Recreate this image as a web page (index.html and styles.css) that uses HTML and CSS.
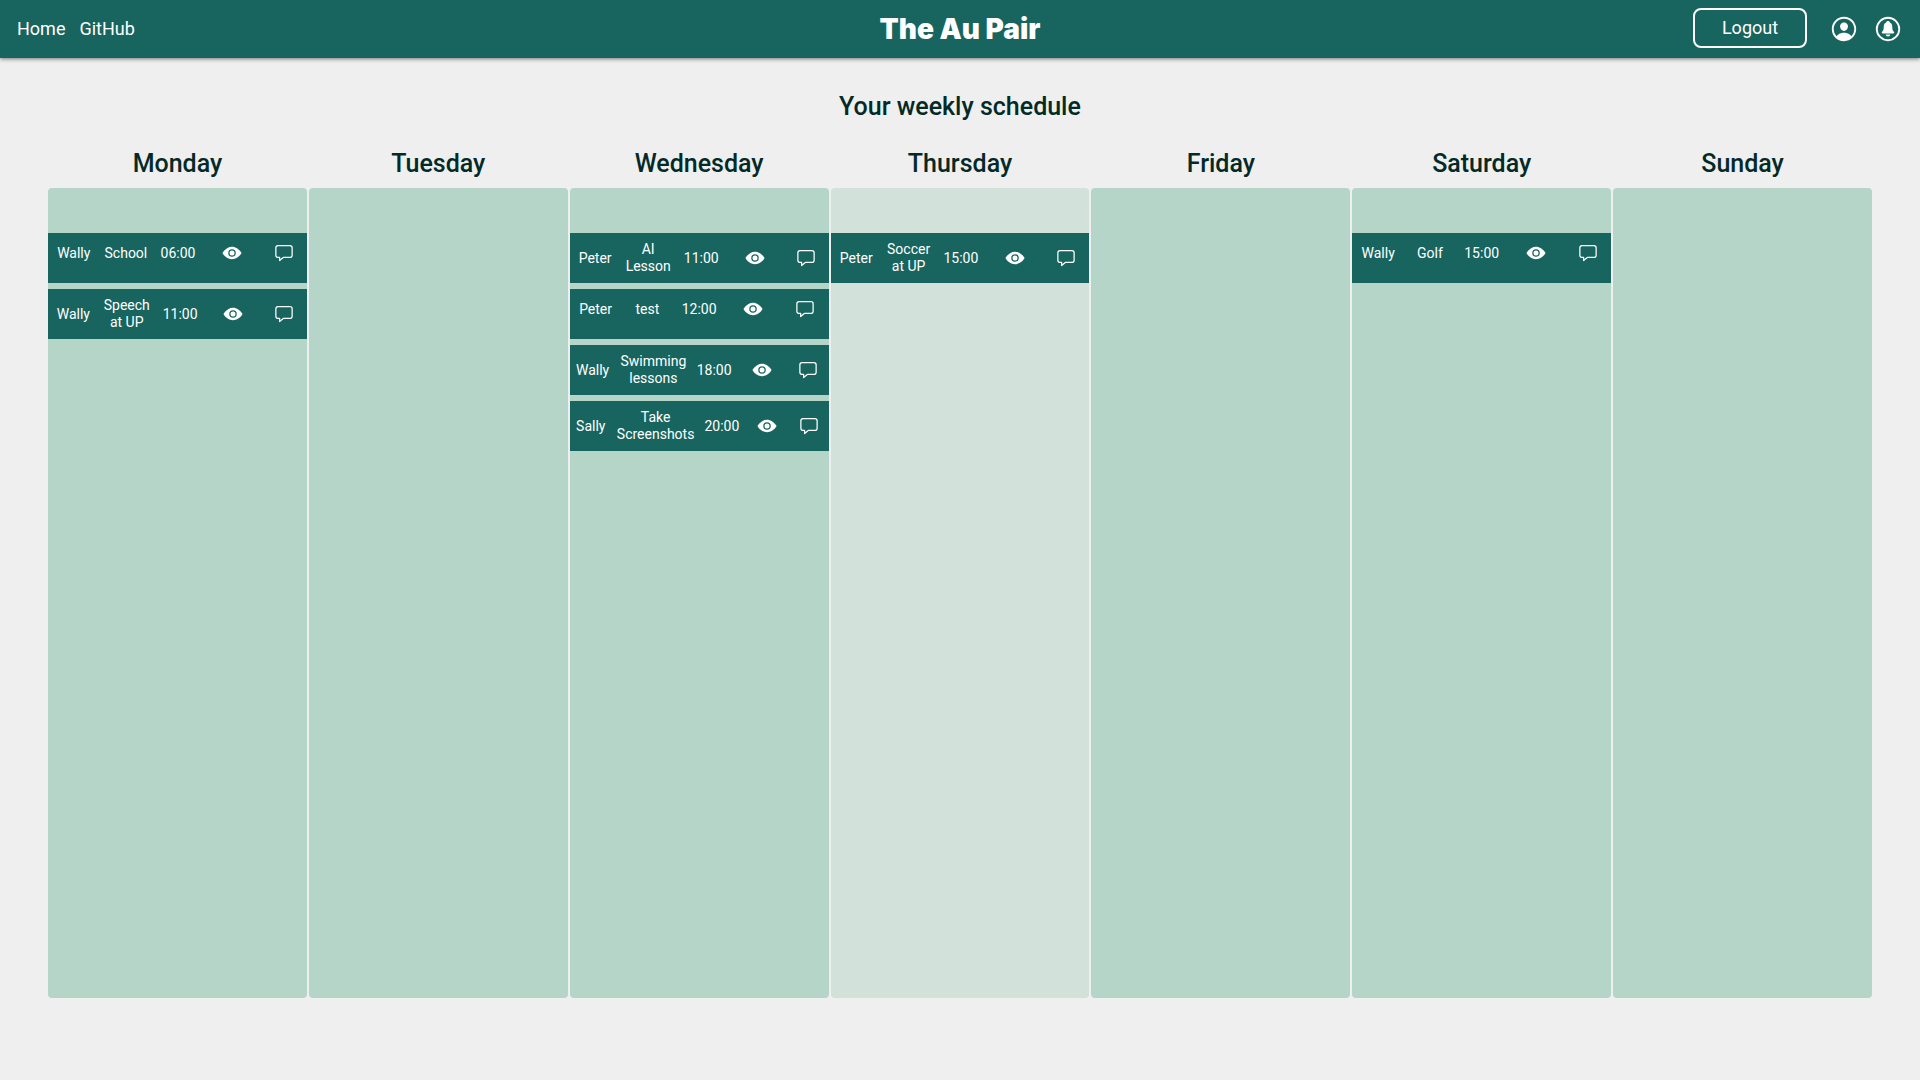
FILE: index.html
```html
<!DOCTYPE html>
<html lang="en">
<head>
<meta charset="utf-8">
<meta name="viewport" content="width=device-width, initial-scale=1">
<title>The Au Pair</title>
<link rel="stylesheet" href="styles.css">
</head>
<body>
<svg class="sprite" aria-hidden="true">
  <symbol id="eye" viewBox="0 0 512 512"><circle cx="256" cy="256" r="64"/><path d="M490.84 238.6c-26.46-40.92-60.79-75.68-99.27-100.53C349 110.55 302 96 255.66 96c-42.52 0-84.33 12.15-124.27 36.11-40.73 24.43-77.63 60.12-109.68 106.07a31.92 31.92 0 00-.64 35.54c26.41 41.33 60.4 76.14 98.28 100.65C162 402 207.9 416 255.66 416c46.71 0 93.81-14.43 136.2-41.72 38.46-24.77 72.72-59.66 99.08-100.92a32.2 32.2 0 00-.1-34.76zM256 352a96 96 0 1196-96 96.11 96.11 0 01-96 96z"/></symbol>
  <symbol id="chat" viewBox="0 0 512 512"><path fill="none" stroke="currentColor" stroke-width="32" stroke-linejoin="round" d="M408 64H104a56.16 56.16 0 00-56 56v192a56.16 56.16 0 0056 56h40v80l93.72-78.14a8 8 0 015.13-1.86H408a56.16 56.16 0 0056-56V120a56.16 56.16 0 00-56-56z"/></symbol>
</svg>
<header class="topbar">
  <nav class="links">
    <a href="#home">Home</a>
    <a href="#github">GitHub</a>
  </nav>
  <div class="brand">The Au Pair</div>
  <div class="actions">
    <button class="logout" type="button">Logout</button>
    <button class="icon-button" type="button" aria-label="Profile"><svg class="icon-large" viewBox="0 0 512 512"><path d="M258.9 48C141.92 46.42 46.42 141.92 48 258.9c1.56 112.19 92.91 203.54 205.1 205.1 117 1.6 212.48-93.9 210.88-210.88C462.44 140.91 371.09 49.56 258.9 48zm126.42 327.25a4 4 0 01-6.14-.32 124.27 124.27 0 00-32.35-29.59C321.37 329 289.11 320 256 320s-65.37 9-90.83 25.34a124.24 124.24 0 00-32.35 29.58 4 4 0 01-6.14.32A175.32 175.32 0 0180 259c-1.63-97.31 78.22-178.76 175.57-179S432 158.81 432 256a175.32 175.32 0 01-46.68 119.25z"/><path d="M256 144c-19.72 0-37.55 7.39-50.22 20.82s-19 32-17.57 51.93C191.11 256 221.52 288 256 288s64.83-32 67.79-71.24c1.48-19.74-4.8-38.14-17.68-51.82C293.39 151.44 275.59 144 256 144z"/></svg></button>
    <button class="icon-button" type="button" aria-label="Notifications"><svg class="icon-large" viewBox="0 0 512 512"><circle cx="256" cy="256" r="192" fill="none" stroke="currentColor" stroke-width="32"/><path d="M218 348h76c0 20-18 34-38 34s-38-14-38-34z"/><path d="M356 302c-15-18-27-26-27-81 0-50-20-68-42-77-5-14-15-24-31-24s-26 10-31 24c-22 9-42 27-42 77 0 55-12 63-27 81-11 14-5 30 12 30h176c17 0 23-16 12-30z"/></svg></button>
  </div>
</header>
<main class="schedule">
  <h1 class="title">Your weekly schedule</h1>
  <div class="week">
    <section class="day">
      <h2 class="day-name">Monday</h2>
      <ul class="day-list">
        <li class="task"><span>Wally</span><span>School</span><span>06:00</span><div class="action"><button type="button" aria-label="View"><svg><use href="#eye"/></svg></button></div><div class="action"><button type="button" aria-label="Chat"><svg><use href="#chat"/></svg></button></div></li>
        <li class="task"><span>Wally</span><span>Speech at UP</span><span>11:00</span><div class="action"><button type="button" aria-label="View"><svg><use href="#eye"/></svg></button></div><div class="action"><button type="button" aria-label="Chat"><svg><use href="#chat"/></svg></button></div></li>
      </ul>
    </section>
    <section class="day">
      <h2 class="day-name">Tuesday</h2>
      <ul class="day-list"></ul>
    </section>
    <section class="day">
      <h2 class="day-name">Wednesday</h2>
      <ul class="day-list">
        <li class="task"><span>Peter</span><span>AI Lesson</span><span>11:00</span><div class="action"><button type="button" aria-label="View"><svg><use href="#eye"/></svg></button></div><div class="action"><button type="button" aria-label="Chat"><svg><use href="#chat"/></svg></button></div></li>
        <li class="task"><span>Peter</span><span>test</span><span>12:00</span><div class="action"><button type="button" aria-label="View"><svg><use href="#eye"/></svg></button></div><div class="action"><button type="button" aria-label="Chat"><svg><use href="#chat"/></svg></button></div></li>
        <li class="task"><span>Wally</span><span>Swimming lessons</span><span>18:00</span><div class="action"><button type="button" aria-label="View"><svg><use href="#eye"/></svg></button></div><div class="action"><button type="button" aria-label="Chat"><svg><use href="#chat"/></svg></button></div></li>
        <li class="task"><span>Sally</span><span>Take Screenshots</span><span>20:00</span><div class="action"><button type="button" aria-label="View"><svg><use href="#eye"/></svg></button></div><div class="action"><button type="button" aria-label="Chat"><svg><use href="#chat"/></svg></button></div></li>
      </ul>
    </section>
    <section class="day today">
      <h2 class="day-name">Thursday</h2>
      <ul class="day-list">
        <li class="task"><span>Peter</span><span>Soccer at UP</span><span>15:00</span><div class="action"><button type="button" aria-label="View"><svg><use href="#eye"/></svg></button></div><div class="action"><button type="button" aria-label="Chat"><svg><use href="#chat"/></svg></button></div></li>
      </ul>
    </section>
    <section class="day">
      <h2 class="day-name">Friday</h2>
      <ul class="day-list"></ul>
    </section>
    <section class="day">
      <h2 class="day-name">Saturday</h2>
      <ul class="day-list">
        <li class="task"><span>Wally</span><span>Golf</span><span>15:00</span><div class="action"><button type="button" aria-label="View"><svg><use href="#eye"/></svg></button></div><div class="action"><button type="button" aria-label="Chat"><svg><use href="#chat"/></svg></button></div></li>
      </ul>
    </section>
    <section class="day">
      <h2 class="day-name">Sunday</h2>
      <ul class="day-list"></ul>
    </section>
  </div>
</main>
</body>
</html>
```
FILE: styles.css
```css
* {
  box-sizing: border-box;
}

body {
  margin: 0;
  background: #efefef;
  color: #042a28;
  font-family: Roboto, "Liberation Sans", sans-serif;
}

button {
  margin: 0;
  padding: 0;
  border: 0;
  background: none;
  color: inherit;
  font: inherit;
  cursor: pointer;
}

svg {
  display: block;
  fill: currentColor;
}

.sprite {
  display: none;
}

.topbar {
  display: grid;
  grid-template-columns: 1fr auto 1fr;
  align-items: center;
  height: 58px;
  padding: 0 17px;
  background: #18655f;
  color: #ffffff;
  font-size: 18px;
  line-height: 20px;
  box-shadow: 0 1px 4px rgba(0, 0, 0, 0.5);
}

.links {
  display: flex;
  gap: 14px;
}

.links a {
  color: inherit;
  text-decoration: none;
}

.brand {
  font-family: Inter, Roboto, sans-serif;
  font-size: 28px;
  font-weight: 900;
  line-height: 32px;
}

.actions {
  display: flex;
  justify-content: flex-end;
  align-items: center;
  gap: 14px;
}

.logout {
  width: 114px;
  height: 40px;
  margin: 0 8px 2px 0;
  border: 2px solid #ffffff;
  border-radius: 8px;
}

.icon-large {
  width: 30px;
  height: 30px;
}

.schedule {
  padding: 32px 48px;
}

.title,
.day-name {
  margin: 0;
  font-size: 25px;
  font-weight: 500;
  line-height: 33px;
  text-align: center;
}

.week {
  display: grid;
  grid-template-columns: repeat(7, minmax(0, 1fr));
  gap: 2px;
  margin-top: 24px;
}

.day-list {
  display: flex;
  flex-direction: column;
  gap: 6px;
  min-height: 75vh;
  margin: 8px 0 0;
  padding: 45px 0 0;
  border-radius: 4px;
  background: #b5d5c8;
  list-style: none;
}

.today .day-list {
  background: #d2e1da;
}

.task {
  display: flex;
  flex-wrap: wrap;
  align-items: center;
  align-content: flex-start;
  min-height: 50px;
  padding: 8px 0;
  background: #18655f;
  color: #ffffff;
  font-size: 14px;
  line-height: 17px;
  text-align: center;
}

.task > * {
  flex: 1 1 0;
  padding: 0 5px;
}

.action button {
  display: flex;
  justify-content: center;
  align-items: center;
  width: 88%;
  height: 24px;
  margin-left: 12%;
}

.action svg {
  width: 20px;
  height: 20px;
}
```
